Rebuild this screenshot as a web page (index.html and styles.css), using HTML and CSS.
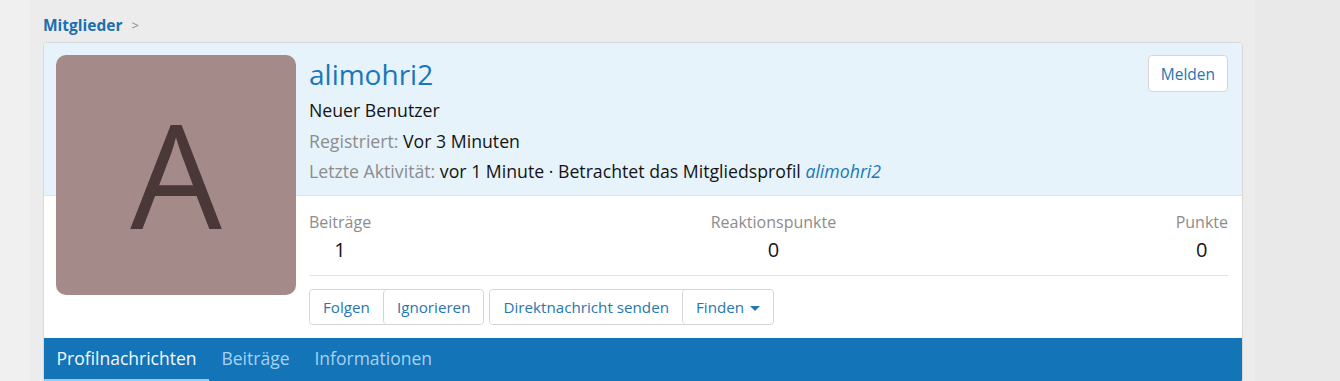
FILE: index.html
```html
<!DOCTYPE html>
<html lang="de">
<head>
  <meta charset="UTF-8">
  <title>alimohri2 | Mitglieder</title>
  <meta name="viewport" content="width=device-width, initial-scale=1.0">
  <link rel="stylesheet" href="styles.css">
</head>
<body>
  <div class="seite">
    <div class="rand"></div>
    <div class="inhalt">
      <div class="breadcrumb">
        <a href="#">Mitglieder</a>
        <span class="pfeil">&gt;</span>
      </div>
      <div class="mitglied">
        <div class="avatar">A</div>
        <div class="kopf">
          <div class="kopf-text">
            <h1 class="name">alimohri2</h1>
            <div class="titel">Neuer Benutzer</div>
            <div class="zeile"><span class="grau">Registriert:</span> Vor 3 Minuten</div>
            <div class="zeile"><span class="grau">Letzte Aktivität:</span> vor 1 Minute · Betrachtet das Mitgliedsprofil <em class="link">alimohri2</em></div>
          </div>
          <button class="btn-melden">Melden</button>
        </div>
        <div class="unten">
          <div class="stats">
            <div class="stat">
              <div class="stat-label">Beiträge</div>
              <div class="stat-wert">1</div>
            </div>
            <div class="stat">
              <div class="stat-label">Reaktionspunkte</div>
              <div class="stat-wert">0</div>
            </div>
            <div class="stat">
              <div class="stat-label">Punkte</div>
              <div class="stat-wert">0</div>
            </div>
          </div>
          <div class="aktionen">
            <div class="gruppe">
              <button>Folgen</button>
              <button>Ignorieren</button>
            </div>
            <div class="gruppe">
              <button>Direktnachricht senden</button>
              <button>Finden <span class="caret"></span></button>
            </div>
          </div>
        </div>
        <div class="tabs">
          <a href="#" class="tab aktiv">Profilnachrichten</a>
          <a href="#" class="tab">Beiträge</a>
          <a href="#" class="tab">Informationen</a>
        </div>
      </div>
    </div>
  </div>
</body>
</html>
```

FILE: styles.css
```css
body {
  margin: 0;
  background: #e9e9e9;
  font-family: 'Open Sans', sans-serif;
  font-size: 16px;
  color: #141414;
}
.seite {
  display: flex;
  height: 381px;
  overflow: hidden;
}
.rand {
  width: 30px;
  background: #f0f0f0;
}
.inhalt {
  width: 1200px;
  padding: 0 12px 0 13px;
  background: #ececec;
}
.breadcrumb {
  height: 42px;
  display: flex;
  align-items: center;
  padding-top: 8px;
  box-sizing: border-box;
  font-size: 15.5px;
}
.breadcrumb a {
  color: #1a6fb1;
  font-weight: bold;
  text-decoration: none;
}
.pfeil {
  color: #8a8a8a;
  margin-left: 9px;
  font-size: 13px;
}
.mitglied {
  position: relative;
  background: #fff;
  border: 1px solid #d8d8d8;
  border-radius: 4px;
  overflow: hidden;
}
.avatar {
  position: absolute;
  left: 12px;
  top: 12px;
  width: 240px;
  height: 240px;
  border-radius: 10px;
  background: #a58a8a;
  color: #4a3737;
  font-size: 145px;
  line-height: 236px;
  text-align: center;
}
.kopf {
  display: flex;
  justify-content: space-between;
  background: #e6f3fb;
  border-bottom: 1px solid #d9e6ef;
  padding: 12px 14px 0 265px;
  height: 140px;
  font-size: 17.7px;
}
.name {
  margin: 0;
  font-size: 28px;
  font-weight: normal;
  color: #1a77ba;
  line-height: 38px;
}
.titel, .zeile {
  line-height: 30.5px;
}
.titel {
  margin-top: 2px;
}
.grau {
  color: #8c8c8c;
}
.link {
  color: #1a77ba;
}
.btn-melden {
  align-self: flex-start;
  height: 37px;
  padding: 0 12px;
  background: #fff;
  border: 1px solid #d5d5d5;
  border-radius: 4px;
  font-family: inherit;
  font-size: 15.5px;
  color: #2577b1;
}
.unten {
  padding: 12px 14px 12px 265px;
  height: 118px;
}
.stats {
  display: flex;
  justify-content: space-between;
  border-bottom: 1px solid #e2e2e2;
  padding-bottom: 11px;
}
.stat {
  text-align: center;
}
.stat-label {
  color: #8c8c8c;
  line-height: 28px;
}
.stat-wert {
  font-size: 20px;
  line-height: 28px;
}
.aktionen {
  display: flex;
  gap: 5px;
  margin-top: 13px;
}
.gruppe {
  display: flex;
  border: 1px solid #d5d5d5;
  border-radius: 4px;
}
.gruppe button {
  height: 34px;
  padding: 0 13px;
  background: #fff;
  border: none;
  border-left: 1px solid #d5d5d5;
  border-radius: 4px;
  font-family: inherit;
  font-size: 15.2px;
  color: #2577b1;
}
.gruppe button:first-child {
  border-left: none;
}
.caret {
  display: inline-block;
  border-left: 5px solid transparent;
  border-right: 5px solid transparent;
  border-top: 5px solid #2577b1;
  vertical-align: middle;
  margin-left: 2px;
}
.tabs {
  display: flex;
  background: #1474b8;
  height: 44px;
}
.tab {
  padding: 0 12.5px;
  line-height: 41px;
  font-size: 17.5px;
  color: #a6d2f3;
  text-decoration: none;
  border-bottom: 3px solid transparent;
}
.tab.aktiv {
  color: #f4f9fd;
  border-bottom-color: #9ccbf0;
}
```
